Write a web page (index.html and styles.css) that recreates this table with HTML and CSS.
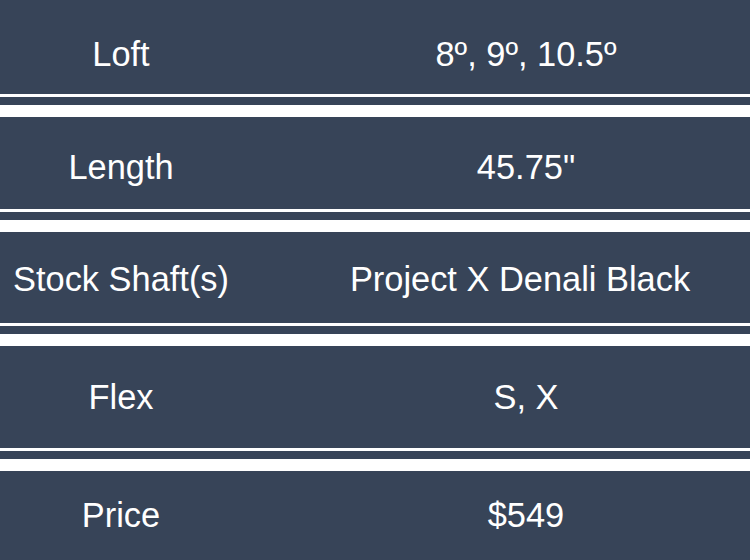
FILE: index.html
```html
<!DOCTYPE html>
<html lang="en">
<head>
<meta charset="utf-8">
<title>Specs</title>
<link rel="stylesheet" href="styles.css">
</head>
<body>
<div class="specs">
  <div class="row">
    <div class="cells r1"><div class="label">Loft</div><div class="value">8º, 9º, 10.5º</div></div>
  </div>
  <div class="row">
    <div class="cells r2"><div class="label">Length</div><div class="value">45.75"</div></div>
  </div>
  <div class="row">
    <div class="cells r3"><div class="label">Stock Shaft(s)</div><div class="value value-wide">Project X Denali Black</div></div>
  </div>
  <div class="row">
    <div class="cells r4"><div class="label">Flex</div><div class="value">S, X</div></div>
  </div>
  <div class="row last">
    <div class="cells r5"><div class="label">Price</div><div class="value">$549</div></div>
  </div>
</div>
</body>
</html>
```
FILE: styles.css
```css
html, body {
  margin: 0;
  padding: 0;
  background: #ffffff;
  width: 750px;
  height: 560px;
  overflow: hidden;
}

.specs {
  display: flex;
  flex-direction: column;
  gap: 12px;
  font-family: "Liberation Sans", Arial, sans-serif;
  font-size: 34.4px;
  color: #ffffff;
}

.row {
  background: #374458;
  padding-bottom: 8px;
}

.row.last {
  padding-bottom: 0;
}

.cells {
  display: grid;
  grid-template-columns: 242px 1fr;
  column-gap: 60px;
  align-items: center;
  box-sizing: border-box;
  border-bottom: 3px solid #ffffff;
}

.row.last .cells {
  border-bottom: 0;
}

.label,
.value {
  text-align: center;
  white-space: nowrap;
}

.value-wide {
  padding-right: 12px;
}

.r1 { height: 97px; padding-top: 14px; }
.r2 { height: 95px; padding-top: 8px; }
.r3 { height: 94px; padding-top: 3px; }
.r4 { height: 105px; }
.r5 { height: 89px; padding-top: 0; }
```
